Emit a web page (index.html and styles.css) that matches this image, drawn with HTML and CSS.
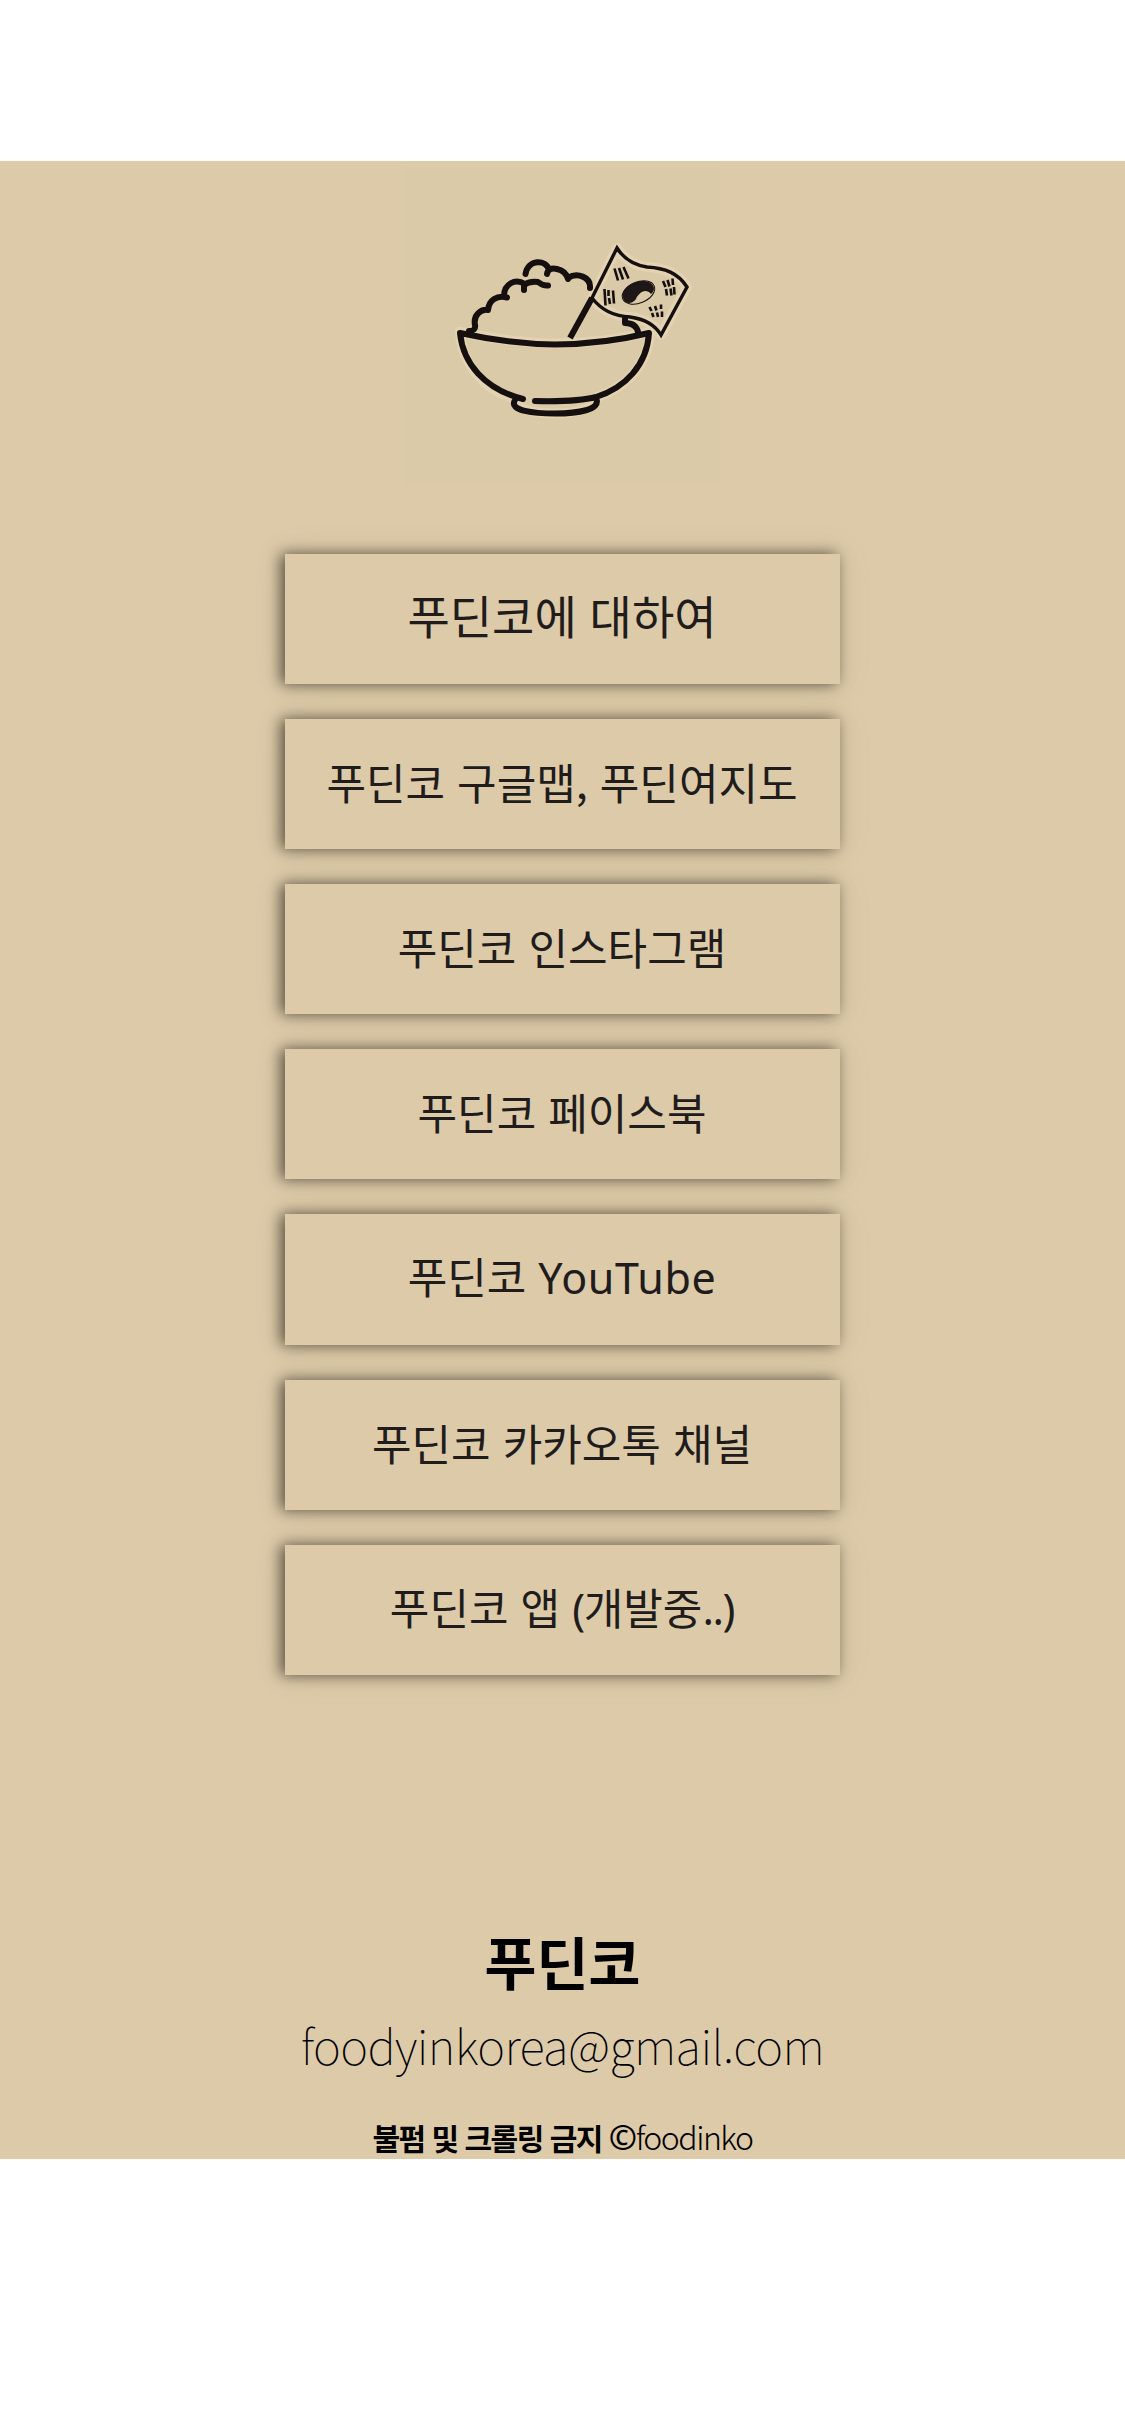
FILE: index.html
```html
<!DOCTYPE html>
<html lang="ko">
<head>
<meta charset="utf-8">
<title>푸딘코</title>
<link rel="stylesheet" href="styles.css">
</head>
<body>
<main class="page">
  <div class="logo">
    <svg class="logo-art" viewBox="-2 0 350 350" role="img" aria-label="푸딘코">
      <g class="halo">
        <path d="M70 181Q120 192 165 192.500Q215 192 260 181C258 215 235 237 207 246Q205 262 165 262.500Q125 262 124 247C92 238 72 212 70 181M227 97Q237 113 257 116C275 117 288 122 297 136L271 184Q262 169 240 166Q216 165 202 147Z"/>
      </g>
      <g class="line">
        <path class="bold" d="M79 180Q86 180 85 174C83 164 91 158 98 159C99 149 107 144 117 146.500M114 145C114 133 125 127 135 133M134 139V134Q139 130 148 131Q153 135 158 134.500M135.500 123C138 108 156 108 159 119M157 123Q158 116 167 118Q176 120 178 128M178 127C187 121 201 126 200 137M235 168V172Q246 172 248 181"/>
        <path class="bold" d="M70 182Q120 193 165 193.500Q215 193 259 182C257 214 235 237 206 246Q187 251 145 250M70 182C73 212 94 238 133 248M125 249C118 260 145 262.500 165 262.500C187 262.500 212 259 206 247"/>
        <path class="pole" d="M180 187L202 147"/>
        <path class="flag" d="M202 147L227 97Q237 113 257 116C275 117 288 122 297 136L271 184Q262 169 240 166Q216 165 202 147Z"/>
        <path class="bars" d="M224.500 117.500L228 129.500M229 117L233 128.500M233.500 116L238.500 127.500M214.500 138L215.500 154.500M218.500 139V145M219 147L220 153M223 139.500L224 152.500M273 130L275.500 136M276 138L277 144.500M277.500 129L279.500 135.500M280.500 137.500L281.500 144.500M282.500 127.500L283 134M284 136L284.500 143.500M259.500 156L261.500 160M262 162L263.500 166M265 155L266.500 159.500M267 161.500L268 166M271 153.500V158M272 160.500V166"/>
        <ellipse class="disc" cx="248.500" cy="141.500" rx="17" ry="10.500" transform="rotate(-22 248.500 141.500)"/>
        <path class="yin" d="M233 147C231 138 242 130 253 130C264 130 267 139 261 143C255 136 248 143 246 148C242 154 234 153 233 147Z"/>
      </g>
    </svg>
  </div>
  <nav class="links">
    <a class="link link-lead">푸딘코에 대하여</a>
    <a class="link">푸딘코 구글맵, 푸딘여지도</a>
    <a class="link">푸딘코 인스타그램</a>
    <a class="link">푸딘코 페이스북</a>
    <a class="link"><span>푸딘코 <span class="latin">YouTube</span></span></a>
    <a class="link">푸딘코 카카오톡 채널</a>
    <a class="link link-last"><span>푸딘코 앱 <span class="paren">(</span>개발중<span class="paren">..)</span></span></a>
  </nav>
  <footer class="footer">
    <h1 class="name">푸딘코</h1>
    <p class="mail">foodyinkorea@gmail.com</p>
    <p class="notice"><b>불펌 및 크롤링 금지 </b><span class="copy">©</span><span class="owner">foodinko</span></p>
  </footer>
</main>
</body>
</html>
```
FILE: styles.css
```css
body {
  margin: 0;
  padding: 161px 0 277px;
  background: #fff;
  font-family: "Noto Sans CJK KR", sans-serif;
}
.page {
  box-sizing: border-box;
  height: 1998px;
  background: #ddcaa9;
  display: flex;
  flex-direction: column;
  align-items: center;
}
.logo {
  width: 316px;
  height: 318px;
  margin-top: 6px;
  background: #dbcaa7;
  display: flex;
  justify-content: center;
  align-items: center;
}
.logo-art {
  flex: none;
  width: 350px;
  height: 350px;
}
.line, .halo {
  fill: none;
  stroke: #15100f;
  stroke-linecap: round;
  stroke-linejoin: round;
}
.halo { stroke: #e3d3b2; stroke-width: 10; }
.bold { stroke-width: 6; }
.pole { stroke-width: 6; stroke-linecap: butt; }
.flag { stroke-width: 3.4; stroke-linejoin: miter; }
.bars { stroke-width: 2.600; stroke-linecap: butt; }
.disc { stroke-width: 1; }
.yin { fill: #1d1718; stroke: none; }
.links {
  margin-top: 68.700px;
  display: flex;
  flex-direction: column;
  gap: 35px;
}
.link {
  box-sizing: border-box;
  width: 555.500px;
  height: 130.200px;
  padding: 0 1px 6px 0;
  display: flex;
  align-items: center;
  justify-content: center;
  background: #ddcaa9;
  box-shadow: -4px 0 14px rgba(0, 0, 0, .6), 0 0 32px rgba(140, 130, 60, .12);
  color: #201c1c;
  font-size: 43px;
  line-height: 60px;
  white-space: nowrap;
}
.link-lead {
  padding-bottom: 10px;
  font-size: 46px;
}
.link-last { padding-bottom: 4px; }
.latin {
  font-family: "Noto Sans", sans-serif;
  letter-spacing: .600px;
}
.paren {
  font-family: "Noto Sans", sans-serif;
  letter-spacing: -1.400px;
}
.footer {
  margin-top: 242.500px;
  text-align: center;
  color: #000;
}
.name, .mail, .notice { margin: 0; }
.name {
  font-size: 56.500px;
  font-weight: 700;
  line-height: 84px;
}
.mail {
  font-size: 47.500px;
  font-weight: 100;
  line-height: 86px;
  letter-spacing: -.600px;
}
.notice {
  margin-top: 18px;
  font-size: 30px;
  line-height: 60px;
  letter-spacing: -1.500px;
}
.copy {
  font-family: "Open Sans", sans-serif;
  font-size: 34px;
  font-weight: 600;
}
.owner {
  font-size: 32px;
  font-weight: 300;
  letter-spacing: -1.500px;
}
```
